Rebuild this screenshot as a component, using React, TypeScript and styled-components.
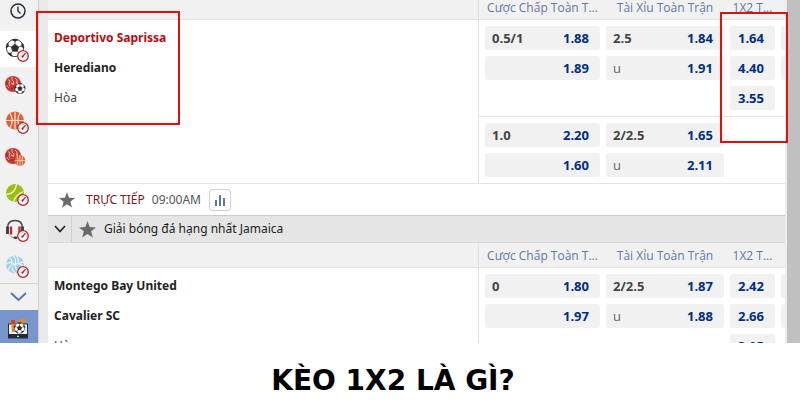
import React from "react";
import styled, { createGlobalStyle, css } from "styled-components";

const GlobalStyle = createGlobalStyle`
  * { box-sizing: border-box; }
  body { margin: 0; background: #fff; }
  button { font: inherit; border: 0; padding: 0; margin: 0; cursor: pointer; }
`;

const Page = styled.div`
  display: flex;
  flex-direction: column;
  height: 100vh;
  overflow: hidden;
`;

const Capture = styled.main`
  position: relative;
  flex: 1;
  min-height: 0;
  display: flex;
  overflow: hidden;
  background: #eaeaea;
  font: 12px/24px "Noto Sans", "Open Sans", sans-serif;
  color: #222;
`;

const Caption = styled.h1`
  margin: 0;
  height: 57px;
  padding-right: 14px;
  background: #fff;
  color: #000;
  text-align: center;
  font: bold 28px/76px "DejaVu Sans", sans-serif;
`;

const Sidebar = styled.nav`
  flex: none;
  width: 39px;
  border-right: 1px solid #cfcfcf;
  background: #f1f1f1;
`;

const SportButton = styled.button<{ $active?: boolean; $height?: number }>`
  display: block;
  width: 100%;
  height: ${(p) => p.$height ?? 36}px;
  background: ${(p) => (p.$active ? "#fff" : "transparent")};
  svg { display: block; }
`;

const MoreButton = styled(SportButton)`
  border-top: 1px solid #d4d4d4;
`;

const LiveTvButton = styled(SportButton)`
  background: #7896cb;
`;

const Board = styled.div`
  flex: 1;
  min-width: 0;
  margin-left: 9px;
  background: #fff;
`;

const ScrollTrack = styled.div`
  flex: none;
  width: 15px;
  border-left: 2px solid #ededed;
  background: #c0c0c0;
`;

const Columns = styled.div`
  display: grid;
  grid-template-columns: minmax(0, 1fr) 307px;
`;

const ColumnHeader = styled(Columns)<{ $scrolled?: boolean }>`
  height: ${(p) => (p.$scrolled ? 20 : 25)}px;
  background: #f1f1f1;
  border-bottom: 1px solid #e4e4e4;
  color: #6079a6;
`;

const oddsTracks = css`
  display: grid;
  grid-template-columns: 115px 118px 45px 45px;
  column-gap: 6px;
  padding-left: 6px;
  border-left: 1px solid #e0e0e0;
`;

const HeaderCells = styled.div`
  ${oddsTracks}
  grid-column: 2;
  align-items: end;
  padding-bottom: 3px;
  font-family: "Open Sans", "Noto Sans", sans-serif;
  line-height: 16px;
  text-align: center;
  white-space: nowrap;
`;

const Match = styled(Columns)`
  border-bottom: 1px solid #e4e4e4;
`;

const Teams = styled.div`
  display: flex;
  flex-direction: column;
  gap: 6px;
  padding: 6px;
`;

const Team = styled.div<{ $tone?: "favourite" | "draw" }>`
  font-weight: ${(p) => (p.$tone === "draw" ? 400 : 700)};
  color: ${(p) => (p.$tone === "favourite" ? "#b50d12" : p.$tone === "draw" ? "#444" : "#222")};
`;

const OddsGroup = styled.div`
  ${oddsTracks}
  overflow: hidden;
  row-gap: 6px;
  padding-top: 6px;
  padding-bottom: 6px;
  & + & { border-top: 1px solid #e4e4e4; }
`;

const Odd = styled.button<{ $column: number; $row: number }>`
  grid-column: ${(p) => p.$column};
  grid-row: ${(p) => p.$row};
  display: flex;
  justify-content: space-between;
  height: 24px;
  padding: 0 11px 0 7px;
  border-radius: 3px;
  background: #f1f1f1;
  font: 13px/24px "Open Sans", "Noto Sans", sans-serif;
`;

const Line = styled.span<{ $plain?: boolean }>`
  font-weight: ${(p) => (p.$plain ? 400 : 700)};
  color: ${(p) => (p.$plain ? "#666" : "#444")};
`;

const Price = styled.span`
  font-weight: 700;
  color: #002d86;
`;

const LiveBar = styled.div`
  display: flex;
  align-items: center;
  height: 31px;
  padding-left: 11px;
  svg { flex: none; }
`;

const LiveLabel = styled.span`
  margin-left: 11px;
  color: #7d1b1e;
`;

const Kickoff = styled.time`
  margin-left: 7px;
  color: #555;
`;

const StatsButton = styled.button`
  display: grid;
  place-items: center;
  width: 22px;
  height: 22px;
  margin-left: 8px;
  border: 1px solid #cfcfcf;
  border-radius: 3px;
  background: #fff;
`;

const League = styled.div`
  display: flex;
  align-items: center;
  height: 28px;
  border-top: 1px solid #cbcbcb;
  border-bottom: 1px solid #dadada;
  background: #e5e5e5;
`;

const Collapse = styled.button`
  display: grid;
  place-items: center;
  width: 24px;
  height: 100%;
  margin-right: 7px;
  border-right: 1px solid #d0d0d0;
  background: transparent;
`;

const LeagueName = styled.span`
  margin-left: 8px;
`;

const Highlight = styled.div<{ $x: string; $y: number; $w: number; $h: number }>`
  position: absolute;
  ${(p) => p.$x};
  top: ${(p) => p.$y}px;
  width: ${(p) => p.$w}px;
  height: ${(p) => p.$h}px;
  border: 2px solid #e01010;
  pointer-events: none;
`;

const Star = ({ size }: { size: number }) => (
  <svg width={size} height={size} viewBox="0 0 16 16" aria-hidden="true">
    <path d="M8 .3 10.1 5.7 16 6 11.4 9.7 13 15.6 8 12.2 3 15.6 4.6 9.7 0 6 5.9 5.7Z" fill="#6b6b6b" />
  </svg>
);

const Gauge = () => (
  <g>
    <circle cx="23" cy="25" r="5.3" fill="#fff" stroke="#b3262b" strokeWidth="1.3" />
    <path d="m22.5 25.7 2.7-3.2" stroke="#b3262b" strokeWidth="1.2" strokeLinecap="round" />
    <circle cx="22.5" cy="25.6" r="1.1" fill="#b3262b" />
    <path d="M19.3 25h1M23 21v1M26 25h1" stroke="#b3262b" strokeWidth=".5" />
  </g>
);

const Soccer = ({ cx, cy, r }: { cx: number; cy: number; r: number }) => (
  <g transform={`translate(${cx} ${cy}) scale(${r / 9})`}>
    <circle r="8.6" fill="#fff" stroke="#333" strokeWidth=".9" />
    <path
      d="M0-3.8 3.7-1.1 2.3 3.2H-2.3L-3.7-1.1ZM-3-8.3 0-6.6 3-8.3Q0-9.3-3-8.3ZM7.1-5 6.5-1.6 8.8 0Q9-2.8 7.1-5ZM-7.1-5-6.5-1.6-8.8 0Q-9-2.8-7.1-5ZM7.1 5 4 5.2 3 8.2Q5.8 7.4 7.1 5ZM-7.1 5-4 5.2-3 8.2Q-5.8 7.4-7.1 5Z"
      fill="#2d2d2d"
      stroke="#2d2d2d"
      strokeWidth=".7"
    />
    <path d="M0-3.8V-7M3.7-1.1 6.7-2M2.3 3.2 4.3 5.7M-2.3 3.2-4.3 5.7M-3.7-1.1-6.7-2" stroke="#444" strokeWidth=".8" />
  </g>
);

const Basket = ({ cx, cy, r }: { cx: number; cy: number; r: number }) => (
  <g transform={`translate(${cx} ${cy}) scale(${r / 9})`}>
    <circle r="9" fill="#dd6238" />
    <path d="M-9 0H9M0-9V9M-5-7.5Q-.8 0-5 7.5M5-7.5Q.8 0 5 7.5" fill="none" stroke="#f8e2d5" strokeWidth="1.2" />
  </g>
);

const VirtualBall = () => (
  <g>
    <circle cx="13" cy="17" r="8" fill="#c93a35" />
    <path
      d="M8 12.5l2 1.5-1 3 1 4M12 10v3l2 2-1 3M15 11l2 2v4M7 18l2 3M11 16l3 1M16 15l2 2"
      fill="none"
      stroke="#f3c3bd"
      strokeWidth=".9"
    />
    <path d="M6 14.5 9 20l4 2M14 20l1 2" fill="none" stroke="#8c1d1e" strokeWidth=".9" />
  </g>
);

const Art = ({ children, height = 36 }: { children: React.ReactNode; height?: number }) => (
  <svg width="38" height={height} viewBox={`0 0 38 ${height}`} fill="none" aria-hidden="true">
    {children}
  </svg>
);

const Chevron = ({ color, w, h }: { color: string; w: number; h: number }) => (
  <svg width={w} height={h} viewBox={`0 0 ${w} ${h}`} fill="none" aria-hidden="true">
    <path d={`M1 1 ${w / 2} ${h - 1.5} ${w - 1} 1`} stroke={color} strokeWidth="1.7" />
  </svg>
);

type OddData = { col: number; row: number; line?: string; price?: string };

const rowsOf = (cells: [string, string, string, string, string?][], extra?: string): OddData[] => [
  ...cells.flatMap(([l1, p1, l2, p2, p3], i) => {
    const row = i + 1;
    const out: OddData[] = [
      { col: 1, row, line: l1, price: p1 },
      { col: 2, row, line: l2, price: p2 },
    ];
    if (p3) out.push({ col: 3, row, price: p3 }, { col: 4, row });
    return out;
  }),
  ...(extra ? [{ col: 3, row: cells.length + 1, price: extra }] : []),
];

const saprissa = [
  rowsOf([["0.5/1", "1.88", "2.5", "1.84", "1.64"], ["", "1.89", "u", "1.91", "4.40"]], "3.55"),
  rowsOf([["1.0", "2.20", "2/2.5", "1.65"], ["", "1.60", "u", "2.11"]]),
];
const montego = [rowsOf([["0", "1.80", "2/2.5", "1.87", "2.42"], ["", "1.97", "u", "1.88", "2.66"]], "3.05")];

const Header = ({ scrolled }: { scrolled?: boolean }) => (
  <ColumnHeader $scrolled={scrolled}>
    <HeaderCells>
      <span>Cược Chấp Toàn T...</span>
      <span>Tài Xỉu Toàn Trận</span>
      <span>1X2 T...</span>
    </HeaderCells>
  </ColumnHeader>
);

const MatchRow = ({ home, away, favourite, groups }: { home: string; away: string; favourite?: boolean; groups: OddData[][] }) => (
  <Match>
    <Teams>
      <Team $tone={favourite ? "favourite" : undefined}>{home}</Team>
      <Team>{away}</Team>
      <Team $tone="draw">Hòa</Team>
    </Teams>
    <div>
      {groups.map((group, g) => (
        <OddsGroup key={g}>
          {group.map((o) => (
            <Odd key={`${o.col}-${o.row}`} type="button" $column={o.col} $row={o.row}>
              <Line $plain={o.line === "u"}>{o.line}</Line>
              <Price>{o.price}</Price>
            </Odd>
          ))}
        </OddsGroup>
      ))}
    </div>
  </Match>
);

export default function App() {
  return (
    <Page>
      <GlobalStyle />
      <Capture>
        <Sidebar>
          <SportButton $height={31} aria-label="Recent">
            <Art height={31}>
              <circle cx="18" cy="11" r="7" stroke="#26303a" strokeWidth="1.5" />
              <path d="M18 6.5V11l2.5 2.5" stroke="#26303a" strokeWidth="1.4" />
            </Art>
          </SportButton>
          <SportButton $active aria-label="Football">
            <Art><Soccer cx={15} cy={17} r={9} /><Gauge /></Art>
          </SportButton>
          <SportButton aria-label="Virtual football">
            <Art><VirtualBall /><Soccer cx={20} cy={21.5} r={5.3} /></Art>
          </SportButton>
          <SportButton aria-label="Basketball">
            <Art><Basket cx={15} cy={17.5} r={9} /><Gauge /></Art>
          </SportButton>
          <SportButton aria-label="Virtual basketball">
            <Art><VirtualBall /><Basket cx={20} cy={21.5} r={5.3} /></Art>
          </SportButton>
          <SportButton aria-label="Tennis">
            <Art>
              <circle cx="15" cy="18" r="9" fill="#9abf12" />
              <path d="M6.5 19.5Q15 19 16.5 9.3M13.5 26.5Q16 19.5 23.5 16.5" stroke="#f4f9dc" strokeWidth="1.3" />
              <Gauge />
            </Art>
          </SportButton>
          <SportButton aria-label="E-sports">
            <Art>
              <path d="M7.5 17Q7.5 9.5 15 9.5T22.5 17" stroke="#444" strokeWidth="1.5" />
              <path d="M7.5 15.5v7.5M22.5 15.5v6" stroke="#3c3c3c" strokeWidth="2.8" />
              <path d="M11 15.5v8M19.5 15.5v6" stroke="#c22a2c" strokeWidth="2.4" />
              <path d="M9 23.5q2 3 5 3" stroke="#999" />
              <ellipse cx="15.5" cy="26.7" rx="2" ry="1.2" fill="#333" />
              <Gauge />
            </Art>
          </SportButton>
          <SportButton aria-label="Volleyball">
            <Art>
              <circle cx="15" cy="17.5" r="9" fill="#a5cfe8" />
              <path
                d="M15 17.5Q17 12 13 8.7M15 17.5Q20 15 23.5 20M15 17.5Q10 17 8 23.5M11.5 17Q13 13 9.5 10.5M6.3 17.5Q10 13.5 15 17.5M18 16.5Q19 12 16.5 8.7M19 16.5Q22 14 23.5 16M12 20Q12 24 16 26.5M15 17.5Q15 23 20 24.5"
                stroke="#eef7fc"
                strokeWidth="1.1"
              />
              <Gauge />
            </Art>
          </SportButton>
          <MoreButton $height={27} aria-label="More sports">
            <Art height={26}>
              <path d="m11 9 7.5 7L26 9" stroke="#5474a8" strokeWidth="1.8" />
            </Art>
          </MoreButton>
          <LiveTvButton $height={34} aria-label="Live TV">
            <Art height={34}>
              <rect x="8.5" y="14" width="19" height="12" fill="#e8f2fa" stroke="#27303e" />
              <path d="M8 24h20v4.5H8Z" fill="#222b3a" />
              <path d="M17 26.3h2" stroke="#fff" />
              <path d="M11 10h4l1 12h-4ZM20 9h7l-7 8-3-1Z" fill="#ef8622" />
              <path d="M11 10h4l.3 4h-4Z" fill="#d43d2e" />
              <Soccer cx={19.5} cy={18} r={5.5} />
            </Art>
          </LiveTvButton>
        </Sidebar>
        <Board>
          <Header scrolled />
          <MatchRow home="Deportivo Saprissa" away="Herediano" favourite groups={saprissa} />
          <LiveBar>
            <Star size={16} />
            <LiveLabel>TRỰC TIẾP</LiveLabel>
            <Kickoff>09:00AM</Kickoff>
            <StatsButton type="button" aria-label="Statistics">
              <svg width="12" height="12" viewBox="0 0 12 12" aria-hidden="true">
                <path d="M2 6v6M6 1v11M10 4v8" stroke="#5b78a8" strokeWidth="2" />
              </svg>
            </StatsButton>
          </LiveBar>
          <League>
            <Collapse type="button" aria-label="Collapse league">
              <Chevron color="#222" w={12} h={8} />
            </Collapse>
            <Star size={17} />
            <LeagueName>Giải bóng đá hạng nhất Jamaica</LeagueName>
          </League>
          <Header />
          <MatchRow home="Montego Bay United" away="Cavalier SC" groups={montego} />
        </Board>
        <ScrollTrack />
        <Highlight $x="left: 36px" $y={11} $w={144} $h={114} />
        <Highlight $x="right: 12px" $y={12} $w={68} $h={131} />
      </Capture>
      <Caption>KÈO 1X2 LÀ GÌ?</Caption>
    </Page>
  );
}
